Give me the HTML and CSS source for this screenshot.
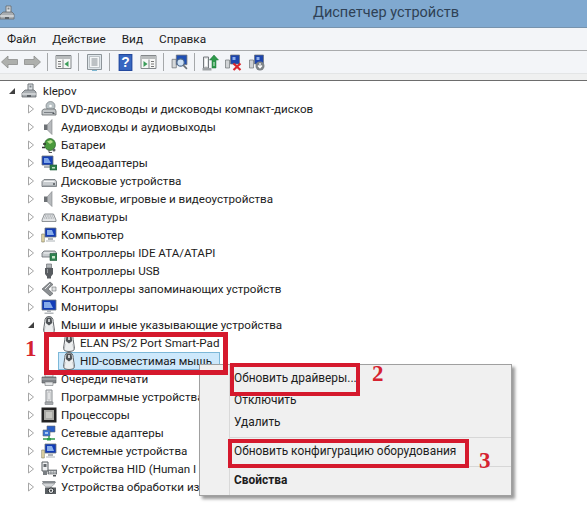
FILE: index.html
```html
<!DOCTYPE html>
<html lang="ru">
<head>
    <meta charset="UTF-8">
    <meta name="viewport" content="width=device-width, initial-scale=1.0">
    <title>Диспетчер устройств</title>
    <link rel="stylesheet" href="styles.css">
</head>
<body>
    <svg class="sprites" width="0" height="0" aria-hidden="true">
        <defs>
            <!-- tree arrows -->
            <symbol id="i-closed" viewBox="0 0 8 10"><path d="M1.500 1 6.500 5 1.500 9Z" fill="#fff" stroke="#a6a6a6"/></symbol>
            <symbol id="i-open" viewBox="0 0 8 10"><path d="M7 2V8H1Z" fill="#404040"/></symbol>
            <!-- device icons -->
            <symbol id="i-host" viewBox="0 0 16 16"><path d="M7 1h5v7H7z" fill="#dfe3e6" stroke="#6f7478"/><path d="M8.500 2.500h2v2h-2z" fill="#7b8288"/><path d="M2 9 4 7h9l2 2v5H1V10z" fill="#a9aeb2" stroke="#666b70" stroke-width=".8"/><path d="M1 11h14" stroke="#f0f2f3"/><path d="M6 12h4v2H6z" fill="#5c6166"/></symbol>
            <symbol id="i-dvd" viewBox="0 0 16 16"><circle cx="9.500" cy="5" r="4.500" fill="#b9c2c5" stroke="#788084" stroke-width=".7"/><circle cx="9.500" cy="5" r="1.300" fill="#fff"/><path d="M1 9.500 3 8h11l1 2v4H1z" fill="#c3c7c9" stroke="#62676b" stroke-width=".8"/><path d="M3 11.500h10" stroke="#7b8085"/><path d="M11.500 12h2v1h-2z" fill="#4c5256"/></symbol>
            <symbol id="i-speaker" viewBox="0 0 16 16"><path d="M3 5.500h3.500V11H3z" fill="#6d7175"/><path d="M6.500 5.500 11 .5v15L6.500 11z" fill="#b7babd" stroke="#7d8185" stroke-width=".6"/></symbol>
            <symbol id="i-battery" viewBox="0 0 16 16"><ellipse cx="9" cy="7.500" rx="5.500" ry="6" fill="#4a9a3c" stroke="#23612a" stroke-width=".7"/><path d="M6 4.500 10 3l2 2-3 2z" fill="#b7e08d"/><path d="M4 10.500H1M5 7H2" stroke="#333" stroke-width="1.300"/><path d="M8 12.500v3h3" stroke="#555" fill="none"/><circle cx="13" cy="13" r="1.500" fill="#5e6266"/></symbol>
            <symbol id="i-display" viewBox="0 0 16 16"><path d="M1 1h11v9H1z" fill="#153fb5" stroke="#6c7378" stroke-width=".8"/><path d="M3 3h4l3 5H3z" fill="#7ba3e8"/><path d="M3 11h7v2H3z" fill="#aeb3b7"/><path d="M9 10h7v5H9z" fill="#2e7f4a" stroke="#1c5a36" stroke-width=".6"/><path d="M11 12h3v1.500h-3z" fill="#bde0c0"/></symbol>
            <symbol id="i-disk" viewBox="0 0 16 16"><path d="M1 8.500 3 6.500h11l1.500 2v5H1z" fill="#c8cccf" stroke="#666b70" stroke-width=".8"/><path d="M3 8.500h10.500" stroke="#f4f5f6"/><path d="M12 10h2v2h-2z" fill="#6d7276"/><path d="M2 13h13" stroke="#8d9296"/></symbol>
            <symbol id="i-keyboard" viewBox="0 0 16 16"><path d="M1 11 3.500 5h9l2.500 6v1.500H1z" fill="#e2e4e6" stroke="#777c80" stroke-width=".8"/><path d="M4 7h8M3.300 9h9.400" stroke="#8e9397" stroke-dasharray="1 .7"/></symbol>
            <symbol id="i-pc" viewBox="0 0 16 16"><path d="M4 1h11v9H4z" fill="#123cb8" stroke="#6d7478" stroke-width=".8"/><path d="M6 3h5l2 5H6z" fill="#89aeea"/><path d="M7 11h5v2H7zM5 13.500h9v1H5z" fill="#aeb3b7"/><path d="M.7 7h2.600v8H.7z" fill="#e4d9a6" stroke="#7c7a62" stroke-width=".6"/></symbol>
            <symbol id="i-ide" viewBox="0 0 16 16"><path d="M1 8 3 6h11l1.500 2v4H1z" fill="#c8cccf" stroke="#666b70" stroke-width=".8"/><path d="M3 8h9" stroke="#f4f5f6"/><path d="M9 8.500h7v7H9z" fill="#2f8150" stroke="#1b5835" stroke-width=".6"/><path d="M11 11h3v2.500h-3z" fill="#c5e5c8"/></symbol>
            <symbol id="i-usb" viewBox="0 0 16 16"><path d="M5.500 1h5v4h-5z" fill="#b3b7ba" stroke="#6d7175" stroke-width=".7"/><path d="M4 5h8v6l-2 2.500v2H6v-2L4 11z" fill="#585c60"/><path d="M6 6h1v4H6z" fill="#96999c"/></symbol>
            <symbol id="i-storage" viewBox="0 0 16 16"><path d="M9 1 1 8l8 7 3-2.500L7 8l5-4.500z" fill="#8b8f92" stroke="#55595c" stroke-width=".6"/><path d="M11 6h4v4h-4z" fill="#dfe1e2" stroke="#6c7073" stroke-width=".6"/><path d="M9 3 4 8" stroke="#e5e7e8"/></symbol>
            <symbol id="i-monitor" viewBox="0 0 16 16"><path d="M1 1h14v10H1z" fill="#123cb8" stroke="#6d7478" stroke-width=".8"/><path d="M3 3h6l3 6H3z" fill="#86abea"/><path d="M6 11h4v2H6zM3.500 13.500h9V15h-9z" fill="#b3b7bb"/></symbol>
            <symbol id="i-mouse" viewBox="0 0 16 18"><path d="M8 .5c3 0 4.200 2 4.200 5l1.300 9c0 2-2.500 3-5.500 3s-5.500-1-5.500-3l1.300-9C3.800 2.500 5 .5 8 .5z" fill="#eceeef" stroke="#55595d" stroke-width=".9"/><path d="M5.500 1.500h5l.7 5.500L8 9.500 4.800 7z" fill="#4d5155"/><path d="M7.200 3h1.600v3H7.200z" fill="#e7e9ea"/><path d="M4 10l-.7 5M12 10l.7 5" stroke="#b5b8bb"/></symbol>
            <symbol id="i-printer" viewBox="0 0 16 16"><path d="M4 2h8v4H4z" fill="#e9ebec" stroke="#72777b" stroke-width=".6"/><path d="M1 6h14v6H1z" fill="#7f8488" stroke="#55595d" stroke-width=".6"/><path d="M1 8h14" stroke="#b7babd"/><path d="M4 11h8v3.500H4z" fill="#e4e6e7" stroke="#72777b" stroke-width=".6"/></symbol>
            <symbol id="i-soft" viewBox="0 0 16 16"><path d="M5 1h6v12H5z" fill="#e6e7e8" stroke="#8a8e92"/><path d="M7 3h2v8H7z" fill="#fff" stroke="#9ca0a3" stroke-width=".6"/><path d="M4 13h8v2.500H4z" fill="#a7abae" stroke="#7c8084" stroke-width=".6"/></symbol>
            <symbol id="i-cpu" viewBox="0 0 16 16"><path d="M.5.500h15v15H.5z" fill="#232323"/><path d="M3 3h10v10H3z" fill="#a9a9a5"/><path d="M5 5h6v6H5z" fill="#c7c7c2"/></symbol>
            <symbol id="i-net" viewBox="0 0 16 16"><path d="M6 1h8v6H6z" fill="#2a5fc7" stroke="#60676e" stroke-width=".6"/><path d="M2 5h7v6H2z" fill="#3b74d6" stroke="#60676e" stroke-width=".6"/><path d="M4 7h3v2H4z" fill="#a8c7f0"/><path d="M2 14h12M8 11v3" stroke="#2f9a4c" stroke-width="1.400"/><path d="M6 13h4v2.500H6z" fill="#2f9a4c"/></symbol>
            <symbol id="i-hid" viewBox="0 0 16 16"><path d="M1 1h6v9H1z" fill="#eef0f1" stroke="#595e62"/><path d="M2.500 3h3v3h-3z" fill="#62676b"/><path d="M2 10h4v4H2z" fill="#7a7f83"/><path d="M7 9h9v4H7z" fill="#8b9094" stroke="#55595d" stroke-width=".6"/><path d="M8 10.500h7M8 12h7" stroke="#e3e5e6" stroke-dasharray="1 .6"/><path d="M12 14h3v1.500h-3z" fill="#4a4e52"/></symbol>
            <symbol id="i-camera" viewBox="0 0 16 16"><path d="M1 2h13l1 2H2z" fill="#868b8f"/><path d="M1 4.500h13L10 8H5z" fill="#d3d6d8" stroke="#747a7e" stroke-width=".5"/><path d="M4 8.500h11V15H4z" fill="#5a5f63"/><circle cx="10" cy="11.700" r="2.800" fill="#e6e8e9" stroke="#2d3134"/><circle cx="10" cy="11.700" r="1.100" fill="#3f4448"/></symbol>
            <!-- toolbar icons -->
            <symbol id="t-back" viewBox="0 0 18 14"><path d="M1 7 7.500 1v3.500H17v5H7.500V13z" fill="#aeb0ad" stroke="#8b8d8b" stroke-width=".8"/></symbol>
            <symbol id="t-forward" viewBox="0 0 18 14"><path d="M17 7 10.500 1v3.500H1v5h9.500V13z" fill="#aeb0ad" stroke="#8b8d8b" stroke-width=".8"/></symbol>
            <symbol id="t-tree" viewBox="0 0 16 14"><path d="M.5.500h15v13H.5z" fill="#f6f7f6" stroke="#83878a"/><path d="M1 1h14v3H1z" fill="#b9bcbd"/><path d="M2.500 6h3v1h-3zM2.500 8.500h3v1h-3zM2.500 11h3v1h-3z" fill="#777"/><path d="M7.500 4.500v9" stroke="#83878a"/><path d="M13 6v6l-4-3z" fill="#3c9d5a"/></symbol>
            <symbol id="t-props" viewBox="0 0 15 17"><path d="M.5.500h14v15H.5z" fill="#dfe6ea" stroke="#8d9499"/><path d="M2.500 2.500h10v11h-10z" fill="#f4f6f7" stroke="#a9b0b4" stroke-width=".7"/><path d="M4.500 5h6M4.500 7h6M4.500 9h6M4.500 11h6" stroke="#858c91"/><path d="M5 16h5v1H5z" fill="#7cb6cf"/></symbol>
            <symbol id="t-help" viewBox="0 0 13 16"><path d="M0 0h13v16H0z" fill="#23499e"/><path d="M1 1h11v14H1z" fill="#3767c1"/><text x="6.500" y="12.500" class="help-mark">?</text></symbol>
            <symbol id="t-pane" viewBox="0 0 16 14"><path d="M.5.500h15v13H.5z" fill="#f6f7f6" stroke="#83878a"/><path d="M1 1h14v3H1z" fill="#b9bcbd"/><path d="M10.500 6h3v1h-3zM10.500 8.500h3v1h-3zM10.500 11h3v1h-3z" fill="#777"/><path d="M8.500 4.500v9" stroke="#83878a"/><path d="M3 6v6l4-3z" fill="#3c9d5a"/></symbol>
            <symbol id="t-scan" viewBox="0 0 16 16"><path d="M1 5h4v8H1z" fill="#d6d9db" stroke="#6d7276" stroke-width=".7"/><path d="M5 1h10v9H5z" fill="#1f4fb5" stroke="#6d7276" stroke-width=".7"/><circle cx="9" cy="8" r="3.400" fill="#cfe2f6" stroke="#4e6a8c"/><path d="M11.500 10.500 15 14" stroke="#6a7076" stroke-width="1.500"/></symbol>
            <symbol id="t-update" viewBox="0 0 16 17"><path d="M1 3h5v11H1z" fill="#e3e5e6" stroke="#74797d"/><path d="M2.500 5h2v7h-2z" fill="#fff"/><path d="M0 14h9v2.500H0z" fill="#9ea2a5"/><path d="M11.500 1 16 6h-2.500v8h-4V6H7z" fill="#2f9a4c" stroke="#1f7237" stroke-width=".5"/><path d="M10.500 9h2M10.500 11h2" stroke="#d8f0dc"/></symbol>
            <symbol id="t-disable" viewBox="0 0 18 17"><path d="M1 6h4v8H1z" fill="#d0d3d5" stroke="#6d7276" stroke-width=".7"/><path d="M6 1h9v9H6z" fill="#1d45ad" stroke="#6d7276" stroke-width=".7"/><path d="M8 3h3v3H8z" fill="#8fb0ea"/><path d="M9 9.500l7 6.500M16 9.500l-7 6.500" stroke="#d9262c" stroke-width="2.200"/></symbol>
            <symbol id="t-remove" viewBox="0 0 16 17"><path d="M1 6h4v8H1z" fill="#d0d3d5" stroke="#6d7276" stroke-width=".7"/><path d="M6 1h9v9H6z" fill="#1d45ad" stroke="#6d7276" stroke-width=".7"/><path d="M8 3h3v3H8z" fill="#8fb0ea"/><circle cx="11.500" cy="12" r="4.500" fill="#7f8589"/><path d="M11.500 9v4.500M9.500 11.500l2 2.300 2-2.300" stroke="#fff" fill="none" stroke-width="1.200"/></symbol>
        </defs>
    </svg>

    <div class="window">
        <header class="titlebar">
            <svg class="app-icon"><use href="#i-host"/></svg>
            <h1>Диспетчер устройств</h1>
        </header>

        <nav class="menubar">
            <span>Файл</span>
            <span>Действие</span>
            <span>Вид</span>
            <span>Справка</span>
        </nav>

        <div class="toolbar">
            <svg class="tool short first"><use href="#t-back"/></svg>
            <svg class="tool short"><use href="#t-forward"/></svg>
            <i class="sep"></i>
            <svg class="tool short"><use href="#t-tree"/></svg>
            <i class="sep"></i>
            <svg class="tool"><use href="#t-props"/></svg>
            <i class="sep"></i>
            <svg class="tool"><use href="#t-help"/></svg>
            <svg class="tool short"><use href="#t-pane"/></svg>
            <i class="sep"></i>
            <svg class="tool"><use href="#t-scan"/></svg>
            <i class="sep"></i>
            <svg class="tool"><use href="#t-update"/></svg>
            <svg class="tool"><use href="#t-disable"/></svg>
            <svg class="tool"><use href="#t-remove"/></svg>
        </div>
        <div class="toolbar-foot"></div>

        <ul class="tree">
            <li class="row root"><svg class="arrow"><use href="#i-open"/></svg><svg class="dev"><use href="#i-host"/></svg><span class="label">klepov</span></li>
            <li class="row"><svg class="arrow"><use href="#i-closed"/></svg><svg class="dev"><use href="#i-dvd"/></svg><span class="label">DVD-дисководы и дисководы компакт-дисков</span></li>
            <li class="row"><svg class="arrow"><use href="#i-closed"/></svg><svg class="dev"><use href="#i-speaker"/></svg><span class="label">Аудиовходы и аудиовыходы</span></li>
            <li class="row"><svg class="arrow"><use href="#i-closed"/></svg><svg class="dev"><use href="#i-battery"/></svg><span class="label">Батареи</span></li>
            <li class="row"><svg class="arrow"><use href="#i-closed"/></svg><svg class="dev"><use href="#i-display"/></svg><span class="label">Видеоадаптеры</span></li>
            <li class="row"><svg class="arrow"><use href="#i-closed"/></svg><svg class="dev"><use href="#i-disk"/></svg><span class="label">Дисковые устройства</span></li>
            <li class="row"><svg class="arrow"><use href="#i-closed"/></svg><svg class="dev"><use href="#i-speaker"/></svg><span class="label">Звуковые, игровые и видеоустройства</span></li>
            <li class="row"><svg class="arrow"><use href="#i-closed"/></svg><svg class="dev"><use href="#i-keyboard"/></svg><span class="label">Клавиатуры</span></li>
            <li class="row"><svg class="arrow"><use href="#i-closed"/></svg><svg class="dev"><use href="#i-pc"/></svg><span class="label">Компьютер</span></li>
            <li class="row"><svg class="arrow"><use href="#i-closed"/></svg><svg class="dev"><use href="#i-ide"/></svg><span class="label">Контроллеры IDE ATA/ATAPI</span></li>
            <li class="row"><svg class="arrow"><use href="#i-closed"/></svg><svg class="dev"><use href="#i-usb"/></svg><span class="label">Контроллеры USB</span></li>
            <li class="row"><svg class="arrow"><use href="#i-closed"/></svg><svg class="dev"><use href="#i-storage"/></svg><span class="label">Контроллеры запоминающих устройств</span></li>
            <li class="row"><svg class="arrow"><use href="#i-closed"/></svg><svg class="dev"><use href="#i-monitor"/></svg><span class="label">Мониторы</span></li>
            <li class="row"><svg class="arrow"><use href="#i-open"/></svg><svg class="dev tall"><use href="#i-mouse"/></svg><span class="label">Мыши и иные указывающие устройства</span></li>
            <li class="row child"><span class="item"><svg class="dev tall"><use href="#i-mouse"/></svg><span class="label">ELAN PS/2 Port Smart-Pad</span></span></li>
            <li class="row child"><span class="item selected"><svg class="dev tall"><use href="#i-mouse"/></svg><span class="label">HID-совместимая мышь</span></span></li>
            <li class="row"><svg class="arrow"><use href="#i-closed"/></svg><svg class="dev"><use href="#i-printer"/></svg><span class="label">Очереди печати</span></li>
            <li class="row"><svg class="arrow"><use href="#i-closed"/></svg><svg class="dev"><use href="#i-soft"/></svg><span class="label">Программные устройства</span></li>
            <li class="row"><svg class="arrow"><use href="#i-closed"/></svg><svg class="dev"><use href="#i-cpu"/></svg><span class="label">Процессоры</span></li>
            <li class="row"><svg class="arrow"><use href="#i-closed"/></svg><svg class="dev"><use href="#i-net"/></svg><span class="label">Сетевые адаптеры</span></li>
            <li class="row"><svg class="arrow"><use href="#i-closed"/></svg><svg class="dev"><use href="#i-pc"/></svg><span class="label">Системные устройства</span></li>
            <li class="row"><svg class="arrow"><use href="#i-closed"/></svg><svg class="dev"><use href="#i-hid"/></svg><span class="label">Устройства HID (Human I</span></li>
            <li class="row"><svg class="arrow"><use href="#i-closed"/></svg><svg class="dev"><use href="#i-camera"/></svg><span class="label">Устройства обработки из</span></li>
        </ul>

        <div class="context-menu">
            <div class="menu-item">Обновить драйверы...</div>
            <div class="menu-item">Отключить</div>
            <div class="menu-item">Удалить</div>
            <div class="menu-sep"></div>
            <div class="menu-item">Обновить конфигурацию оборудования</div>
            <div class="menu-sep"></div>
            <div class="menu-item bold">Свойства</div>
        </div>

        <!-- red notes drawn over the screenshot -->
        <div class="mark mark-1"></div>
        <div class="mark mark-2"></div>
        <div class="mark mark-3"></div>
        <span class="num num-1">1</span>
        <span class="num num-2">2</span>
        <span class="num num-3">3</span>
    </div>
</body>
</html>
```

FILE: styles.css
```css
html, body {
    margin: 0;
    padding: 0;
    background: #fff;
}
body {
    font-family: Roboto, 'Noto Sans', sans-serif;
    font-size: 12px;
    color: #1c1c1c;
}
.sprites {
    position: absolute;
}
.help-mark {
    font-family: 'Liberation Sans', sans-serif;
    font-size: 13px;
    font-weight: bold;
    fill: #fff;
    text-anchor: middle;
}
.window {
    position: relative;
    width: 587px;
    height: 514px;
    overflow: hidden;
}
.titlebar {
    display: flex;
    height: 27px;
    background-color: #80a9d0;
    border-bottom: 1px solid #7793ad;
}
.app-icon {
    width: 16px;
    height: 16px;
    margin: 5px 0 0 -1px;
}
.titlebar h1 {
    margin: 0 0 0 298px;
    font-size: 14.5px;
    font-weight: 400;
    line-height: 26px;
    color: #2f4155;
}
.menubar {
    display: flex;
    gap: 16px;
    height: 22px;
    padding-left: 7px;
    line-height: 22px;
    font-size: 11.8px;
    background-color: #f3f5f8;
    border-bottom: 1px solid #a9abad;
}
.toolbar {
    display: flex;
    align-items: center;
    height: 22px;
    background-color: #f3f5f8;
    border-bottom: 1px solid #e3e5e6;
}
.tool {
    width: 23px;
    height: 17px;
    flex: none;
}
.tool.short {
    height: 14px;
}
.tool.first {
    margin-left: -2px;
}
.sep {
    width: 1px;
    height: 18px;
    margin: 0 4px 0 3px;
    background-color: #a5a8aa;
}
.toolbar-foot {
    height: 6px;
    background-color: #eff0f0;
    border-bottom: 1px solid #6d6d6d;
}
.tree {
    margin: 0;
    padding: 1px 0 0;
    list-style: none;
    font-size: 11.6px;
}
.row {
    display: flex;
    align-items: center;
    height: 18px;
    padding-left: 27px;
    white-space: nowrap;
}
.row.root {
    padding-left: 8px;
}
.row.child {
    padding-left: 58px;
}
.arrow {
    width: 8px;
    height: 10px;
    margin-right: 6px;
    flex: none;
}
.dev {
    width: 16px;
    height: 16px;
    flex: none;
}
.dev.tall {
    height: 18px;
}
.row.root .arrow {
    margin-right: 5px;
}
.label {
    margin-left: 4px;
}
.row.root .label {
    margin-left: 6px;
}
.item {
    display: flex;
    align-items: center;
    height: 18px;
    padding: 0 1px 0 3px;
    box-sizing: border-box;
    border: 1px solid transparent;
    margin-top: -1px;
}
.item .dev {
    margin-left: -1px;
}
.item .label {
    margin-left: 3px;
}
.selected {
    width: 162px;
    background-color: #cde8fb;
    border-color: #7db8d8;
}
.context-menu {
    position: absolute;
    left: 199px;
    top: 364px;
    width: 311px;
    height: 127px;
    padding-top: 3px;
    box-sizing: content-box;
    background: linear-gradient(to right, #f0f0f0 29px, #d9d9d9 29px, #d9d9d9 30px, #f0f0f0 30px);
    border: 1px solid #a0a0a0;
    box-shadow: 3px 3px 3px rgba(0,0,0,0.4);
}
.menu-item {
    height: 22px;
    padding-left: 34px;
    line-height: 21px;
    font-size: 11.9px;
    white-space: nowrap;
}
.menu-item.bold {
    font-weight: 700;
}
.menu-sep {
    height: 1px;
    margin: 3px 0 3px 30px;
    background-color: #d7d7d7;
}
.mark {
    position: absolute;
    border: 4px solid #d5192d;
    box-sizing: border-box;
}
.mark-1 {
    left: 44px;
    top: 332px;
    width: 184px;
    height: 43px;
    border-width: 5px;
}
.mark-2 {
    left: 230px;
    top: 363px;
    width: 130px;
    height: 33px;
}
.mark-3 {
    left: 228px;
    top: 439px;
    width: 241px;
    height: 29px;
}
.num {
    position: absolute;
    font-family: 'Liberation Serif', serif;
    font-size: 23px;
    font-weight: 700;
    line-height: 23px;
    color: #d5222f;
}
.num-1 {
    left: 25px;
    top: 337px;
}
.num-2 {
    left: 372px;
    top: 362px;
}
.num-3 {
    left: 479px;
    top: 449px;
}
```
